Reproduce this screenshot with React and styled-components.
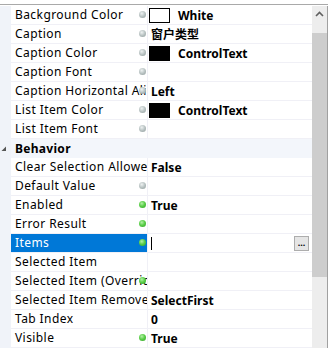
import React from "react";
import styled, { createGlobalStyle, css } from "styled-components";

const Global = createGlobalStyle`
  html, body { margin: 0; padding: 0; background: #ffffff; }
  body { font-family: "Noto Sans", "Noto Sans CJK SC", sans-serif; }
`;

const Frame = styled.div`
  width: 329px;
  height: 348px;
  overflow: hidden;
  background: #ffffff;
  display: flex;
  flex-direction: column;
`;

const TopStrip = styled.div`
  height: 4px;
  flex: none;
  border-bottom: 1px solid #a9a9a9;
  margin-right: 1px;
`;

const Body = styled.div`
  flex: 1;
  display: flex;
  min-height: 0;
  padding-top: 1px;
`;

const Grid = styled.div`
  width: 312px;
  flex: none;
  display: flex;
  flex-direction: column;
`;

const Row = styled.div`
  height: 19px;
  flex: none;
  display: flex;
`;

const Margin = styled.div`
  width: 11px;
  flex: none;
  background: #f0f3f9;
  display: flex;
  align-items: center;
  justify-content: flex-start;
`;

const NameCell = styled.div`
  position: relative;
  width: 137px;
  flex: none;
  box-sizing: border-box;
  border-bottom: 1px solid #f0f0f6;
  border-right: 1px solid #f0f0f6;
  padding-left: 4px;
  font-size: 12px;
  letter-spacing: 0.42px;
  line-height: 18px;
  white-space: nowrap;
  overflow: hidden;
  color: #000000;
  ${(p) =>
    p.$selected &&
    css`
      background: #0078d7;
      color: #ffffff;
    `}
`;

const Dot = styled.span`
  position: absolute;
  right: 1px;
  top: 5px;
  width: 7px;
  height: 7px;
  border-radius: 50%;
  background: ${(p) =>
    p.$green
      ? "radial-gradient(circle at 40% 35%, #b4f0a8 0%, #5ccf4a 45%, #2f9e24 100%)"
      : "radial-gradient(circle at 40% 35%, #eef2f2 0%, #b8c2c2 50%, #8e9a9a 100%)"};
`;

const ValueCell = styled.div`
  position: relative;
  flex: 1;
  box-sizing: border-box;
  border-bottom: 1px solid #f0f0f6;
  padding-left: 3px;
  display: flex;
  align-items: center;
  gap: 8px;
  font-size: 12px;
  font-weight: 700;
  white-space: nowrap;
  overflow: hidden;
  color: #000000;
`;

const Swatch = styled.span`
  width: 19px;
  height: 13px;
  flex: none;
  margin-left: -2px;
  border: 1px solid #000000;
  background: ${(p) => p.$color};
`;

const CategoryRow = styled.div`
  flex: 1;
  background: #f3f6fb;
  padding-left: 4px;
  font-size: 12px;
  font-weight: 700;
  letter-spacing: 0.3px;
  line-height: 19px;
`;

const Caret = styled.span`
  width: 1px;
  height: 13px;
  background: #000000;
`;

const EllipsisButton = styled.span`
  position: absolute;
  right: 3px;
  top: 2px;
  width: 13px;
  height: 13px;
  border: 1px solid #adadad;
  background: #e5e5e5;
  font-size: 9px;
  font-weight: 700;
  line-height: 12px;
  text-align: center;
  color: #000;
`;

const Scrollbar = styled.div`
  width: 15px;
  flex: none;
  background: #ededed;
  display: flex;
  flex-direction: column;
  align-items: stretch;
`;

const ArrowBox = styled.div`
  height: 27px;
  display: flex;
  justify-content: center;
  padding-top: 5px;
  box-sizing: border-box;
`;

const Thumb = styled.div`
  height: 244px;
  background: #cdcdcd;
`;

const RightEdge = styled.div`
  width: 1px;
  flex: none;
  background: #a0a0a0;
`;

const rows = [
  { name: "Background Color", dot: "gray", swatch: "#ffffff", value: "White" },
  { name: "Caption", dot: "gray", value: "窗户类型" },
  { name: "Caption Color", dot: "gray", swatch: "#000000", value: "ControlText" },
  { name: "Caption Font", dot: "gray" },
  { name: "Caption Horizontal Alignment", dot: "gray", value: "Left" },
  { name: "List Item Color", dot: "gray", swatch: "#000000", value: "ControlText" },
  { name: "List Item Font", dot: "gray" },
  { category: "Behavior" },
  { name: "Clear Selection Allowed", value: "False" },
  { name: "Default Value", dot: "gray" },
  { name: "Enabled", dot: "green", value: "True" },
  { name: "Error Result", dot: "green" },
  { name: "Items", dot: "green", selected: true },
  { name: "Selected Item" },
  { name: "Selected Item (Override)", dot: "green" },
  { name: "Selected Item Removed Action", value: "SelectFirst" },
  { name: "Tab Index", value: "0" },
  { name: "Visible", dot: "green", value: "True" },
];

const Expander = () => (
  <svg width="6" height="6" viewBox="0 0 6 6" style={{ marginLeft: 1 }}>
    <path d="M5 0.5 L5 5 L0.5 5 Z" fill="#555" />
  </svg>
);

const UpChevron = () => (
  <svg width="9" height="6" viewBox="0 0 9 6">
    <path d="M1 5 L4.5 1.5 L8 5" stroke="#606060" strokeWidth="1.6" fill="none" />
  </svg>
);

export default function App() {
  return (
    <>
      <Global />
      <Frame>
        <TopStrip />
        <Body>
          <Grid>
            {rows.map((r, i) =>
              r.category ? (
                <Row key={i}>
                  <Margin>
                    <Expander />
                  </Margin>
                  <CategoryRow>{r.category}</CategoryRow>
                </Row>
              ) : (
                <Row key={i}>
                  <Margin />
                  <NameCell $selected={r.selected}>
                    {r.name}
                    {r.dot && <Dot $green={r.dot === "green"} />}
                  </NameCell>
                  <ValueCell>
                    {r.swatch && <Swatch $color={r.swatch} />}
                    {r.value}
                    {r.selected && (
                      <>
                        <Caret />
                        <EllipsisButton>...</EllipsisButton>
                      </>
                    )}
                  </ValueCell>
                </Row>
              )
            )}
          </Grid>
          <Scrollbar>
            <ArrowBox>
              <UpChevron />
            </ArrowBox>
            <Thumb />
          </Scrollbar>
          <RightEdge />
        </Body>
      </Frame>
    </>
  );
}
